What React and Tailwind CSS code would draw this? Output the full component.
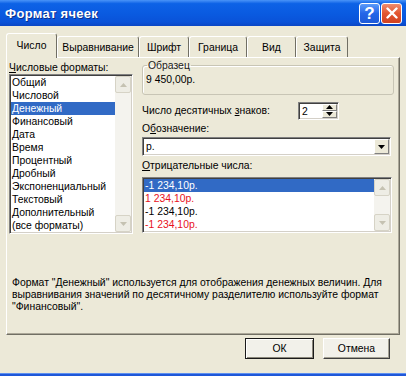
import React from "react";

const formats = [
  "Общий",
  "Числовой",
  "Денежный",
  "Финансовый",
  "Дата",
  "Время",
  "Процентный",
  "Дробный",
  "Экспоненциальный",
  "Текстовый",
  "Дополнительный",
  "(все форматы)",
];

const negatives = [
  { t: "-1 234,10р.", red: false, sel: true },
  { t: "1 234,10р.", red: true },
  { t: "-1 234,10р.", red: false },
  { t: "-1 234,10р.", red: true },
];

function Arrow({ dir = "down", color = "#000", w = 7, h = 4 }) {
  const pts = dir === "down" ? `0,0 ${w},0 ${w / 2},${h}` : `0,${h} ${w},${h} ${w / 2},0`;
  return (
    <svg width={w} height={h} viewBox={`0 0 ${w} ${h}`} className="block">
      <polygon points={pts} fill={color} />
    </svg>
  );
}

function ScrollBar({ height }) {
  return (
    <div className="w-[16px] flex flex-col bg-[#f4f3ee]" style={{ height }}>
      <div className="h-[17px] flex items-center justify-center bg-[#eeede5] border border-[#d6d3c6] rounded-[2px]">
        <Arrow dir="up" color="#c5c2b2" />
      </div>
      <div className="flex-1" />
      <div className="h-[17px] flex items-center justify-center bg-[#eeede5] border border-[#d6d3c6] rounded-[2px]">
        <Arrow dir="down" color="#c5c2b2" />
      </div>
    </div>
  );
}

const sunken =
  "border border-t-[#808080] border-l-[#808080] border-r-white border-b-white shadow-[inset_1px_1px_0_#404040,inset_-1px_-1px_0_#d4d0c8] p-[1px] bg-white";

const tabs = [
  { t: "Число", w: 51, sel: true },
  { t: "Выравнивание", w: 82 },
  { t: "Шрифт", w: 50 },
  { t: "Граница", w: 58 },
  { t: "Вид", w: 49 },
  { t: "Защита", w: 52 },
];

export default function App() {
  return (
    <div className="w-[406px] h-[376px] bg-[#ece9d8] flex flex-col overflow-hidden font-['Liberation_Sans',Arial,sans-serif] text-[10.4px] leading-[13px] text-black">
      {/* Title bar */}
      <div className="h-[26px] flex items-center pl-[5px] pr-[4px] bg-[linear-gradient(180deg,#4a94f8_0%,#0d62e6_14%,#0a5ae0_55%,#0a52d8_85%,#0b46c4_100%)]">
        <div className="flex-1 text-white font-bold text-[13px] tracking-[0.3px] [text-shadow:1px_1px_0_#0a2f8a]">
          Формат ячеек
        </div>
        <div className="w-[21px] h-[21px] rounded-[3px] border border-white bg-[linear-gradient(180deg,#5c9bf9,#2466e8_50%,#1d5ad8)] flex items-center justify-center text-white font-bold text-[17px] leading-none font-['Liberation_Sans',sans-serif]">
          ?
        </div>
        <div className="ml-[1px] w-[21px] h-[21px] rounded-[3px] border border-white bg-[linear-gradient(180deg,#ef8d6f,#e2552f_50%,#d14221)] flex items-center justify-center">
          <svg width="12" height="12" viewBox="0 0 12 12">
            <path d="M1.5 1.5 L10.5 10.5 M10.5 1.5 L1.5 10.5" stroke="#fff" strokeWidth="2.4" strokeLinecap="round" />
          </svg>
        </div>
      </div>

      {/* Tabs */}
      <div className="relative z-10 mt-[7px] ml-[6px] h-[24px] flex items-end">
        {tabs.map((tb) => (
          <div
            key={tb.t}
            style={{ width: tb.w }}
            className={
              tb.sel
                ? "h-[25px] mb-[-1px] bg-[#ece9d8] border-t border-l border-white border-r border-r-[#716f64] rounded-t-[3px] flex items-center justify-center pb-[1px]"
                : "h-[21px] bg-[#ece9d8] border-t border-l border-white border-r border-r-[#716f64] rounded-t-[3px] flex items-center justify-center"
            }
          >
            {tb.t}
          </div>
        ))}
      </div>

      {/* Panel */}
      <div className="ml-[6px] w-[394px] h-[278px] border border-t-white border-l-white border-r-[#716f64] border-b-[#716f64] shadow-[inset_-1px_-1px_0_#aca899] flex flex-col">
        <div className="flex pt-[3px] pl-[2px]">
          {/* Left column */}
          <div className="w-[124px] flex flex-col">
            <div className="h-[13px]">
              <span className="underline">Ч</span>исловые форматы:
            </div>
            <div className={`h-[160px] flex ${sunken}`}>
              <div className="flex-1 flex flex-col">
                {formats.map((f, i) => (
                  <div
                    key={f}
                    className={
                      i === 2
                        ? "h-[13px] pl-[1px] bg-[#316ac5] text-white"
                        : "h-[13px] pl-[1px]"
                    }
                  >
                    {f}
                  </div>
                ))}
              </div>
              <ScrollBar height={156} />
            </div>
          </div>

          {/* Right column */}
          <div className="ml-[9px] w-[252px] flex flex-col">
            <fieldset className="mt-[-2px] h-[36px] border border-[#c8c5b5] rounded-[3px] shadow-[inset_1px_1px_0_#fff] px-[3px]">
              <legend className="ml-[1px] px-[1px] leading-[13px] text-[#222]">Образец</legend>
              <div className="pt-[1px]">9 450,00р.</div>
            </fieldset>

            <div className="mt-[7px] h-[17px] flex items-center">
              <div className="w-[156px]">
                Число десятичных <span className="underline">з</span>наков:
              </div>
              <div className={`w-[41px] h-[18px] flex ${sunken} p-0`}>
                <div className="flex-1 pl-[2px] leading-[15px]">2</div>
                <div className="w-[15px] flex flex-col">
                  <div className="flex-1 flex items-center justify-center bg-[#ece9d8] border border-t-white border-l-white border-r-[#808080] border-b-[#808080]">
                    <Arrow dir="up" w={7} h={4} />
                  </div>
                  <div className="flex-1 flex items-center justify-center bg-[#ece9d8] border border-t-white border-l-white border-r-[#808080] border-b-[#808080]">
                    <Arrow dir="down" w={7} h={4} />
                  </div>
                </div>
              </div>
            </div>

            <div className="mt-[3px] h-[13px]">
              О<span className="underline">б</span>означение:
            </div>
            <div className={`mt-[2px] h-[19px] w-[249px] flex ${sunken} p-[1px]`}>
              <div className="flex-1 pl-[2px] leading-[15px]">р.</div>
              <div className="w-[15px] flex items-center justify-center bg-[#ece9d8] border border-t-white border-l-white border-r-[#808080] border-b-[#808080]">
                <Arrow dir="down" w={7} h={4} />
              </div>
            </div>

            <div className="mt-[3px] h-[13px]">
              <span className="underline">О</span>трицательные числа:
            </div>
            <div className={`mt-[5px] h-[56px] w-[250px] flex ${sunken}`}>
              <div className="flex-1 flex flex-col">
                {negatives.map((n, i) => (
                  <div
                    key={i}
                    className={
                      n.sel
                        ? "h-[13px] pl-[1px] bg-[#316ac5] text-white"
                        : n.red
                        ? "h-[13px] pl-[1px] text-[#e8121c]"
                        : "h-[13px] pl-[1px]"
                    }
                  >
                    {n.t}
                  </div>
                ))}
              </div>
              <ScrollBar height={52} />
            </div>
          </div>
        </div>

        <div className="mt-[43px] pl-[5px] leading-[12px] whitespace-nowrap">
          Формат "Денежный" используется для отображения денежных величин. Для
          <br />
          выравнивания значений по десятичному разделителю используйте формат
          <br />
          "Финансовый".
        </div>
      </div>

      {/* Buttons */}
      <div className="mt-[3px] flex justify-end pr-[16px] gap-[9px]">
        <div className="w-[69px] h-[21px] flex items-center justify-center bg-[#f2f1ea] border border-[#1a1a1a] shadow-[inset_1px_1px_0_#fff,inset_-1px_-1px_0_#8a877a]">
          ОК
        </div>
        <div className="w-[67px] h-[21px] flex items-center justify-center bg-[#f2f1ea] border border-t-white border-l-white border-r-[#404040] border-b-[#404040] shadow-[inset_-1px_-1px_0_#a5a294]">
          Отмена
        </div>
      </div>

      <div className="flex-1" />
      <div className="h-[3px] bg-[#1f57d8] border-t border-[#5d8ff0]" />
    </div>
  );
}
